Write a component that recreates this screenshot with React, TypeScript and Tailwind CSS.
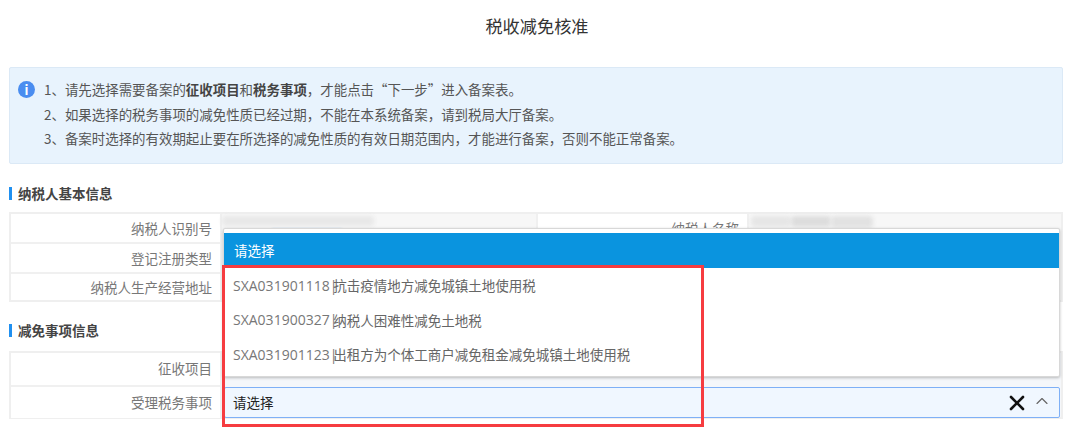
import { X, ChevronUp } from "lucide-react";

const font = { fontFamily: '"Noto Sans CJK SC","Open Sans",sans-serif' };

function Heading({ children, className }: { children: string; className: string }) {
  return (
    <div className={`flex items-center ${className}`}>
      <span className="h-[13px] w-[3px] bg-[#2090f0]" />
      <span className="ml-[6px] text-[13.5px] font-bold leading-[14px] text-[#444]">{children}</span>
    </div>
  );
}

function Label({ children, className = "" }: { children?: string; className?: string }) {
  return (
    <div className={`flex items-center justify-end overflow-hidden border-r-2 border-[#f0f0f0] bg-white pr-[8px] text-[13.5px] text-[#777] ${className}`}>
      {children}
    </div>
  );
}

function Smudge({ className }: { className: string }) {
  return <div className={`absolute rounded-sm blur-[2px] ${className}`} />;
}

export default function App() {
  const options = [
    ["SXA031901118|", "抗击疫情地方减免城镇土地使用税"],
    ["SXA031900327|", "纳税人困难性减免土地税"],
    ["SXA031901123|", "出租方为个体工商户减免租金减免城镇土地使用税"],
  ];
  return (
    <div style={font} className="relative h-[448px] w-[1080px] overflow-hidden bg-white pl-[9px] pr-[17px]">
      <h1 className="pl-[2px] pt-[14px] text-center text-[17.2px] font-normal leading-[24px] text-[#333]">税收减免核准</h1>

      <div className="mt-[29px] flex h-[97px] rounded-[2px] border border-[#dbe9f6] bg-[#e8f3fd] pl-[8px] pt-[9px]">
        <div className="mt-[4px] flex h-[17px] w-[17px] items-center justify-center rounded-full bg-[#4a8df0] text-[13px] font-bold leading-none text-white">i</div>
        <div className="ml-[9px] text-[13.45px] leading-[24.5px] text-[#555]">
          <p>1、请先选择需要备案的<b className="text-[#444]">征收项目</b>和<b className="text-[#444]">税务事项</b>，才能点击“下一步”进入备案表。</p>
          <p>2、如果选择的税务事项的减免性质已经过期，不能在本系统备案，请到税局大厅备案。</p>
          <p>3、备案时选择的有效期起止要在所选择的减免性质的有效日期范围内，才能进行备案，否则不能正常备案。</p>
        </div>
      </div>

      <Heading className="mt-[22px]">纳税人基本信息</Heading>

      <div className="mt-[12px] grid h-[90px] grid-cols-[211px_316px_211px_1fr] grid-rows-[30px_30px_26px] border-2 border-[#efefef] bg-[#f7f7f7]">
        <Label className="border-b-2 pt-[1px]">纳税人识别号</Label>
        <div className="relative border-r-2 border-[#f0f0f0]">
          <Smudge className="left-[0px] top-[2px] h-[10px] w-[152px] bg-[#e8e8e8]" />
          <div className="absolute left-[50px] top-[15px] h-[2px] w-[70px] rounded bg-[#7db8ec] blur-[1px]" />
        </div>
        <Label className="border-b-2 pt-[1px]">纳税人名称</Label>
        <div className="relative">
          <Smudge className="left-[2px] top-[2px] h-[11px] w-[40px] bg-[#e6e6e6]" />
          <Smudge className="left-[42px] top-[2px] h-[11px] w-[40px] bg-[#dddddd]" />
          <Smudge className="left-[82px] top-[2px] h-[12px] w-[42px] bg-[#e2e2e2]" />
        </div>
        <Label className="border-b-2 pt-[1px]">登记注册类型</Label>
        <div className="border-r-2 border-[#f0f0f0]" />
        <Label />
        <div />
        <Label className="pt-[1px]">纳税人生产经营地址</Label>
        <div className="col-span-3" />
      </div>

      <Heading className="mt-[21px]">减免事项信息</Heading>

      <div className="mt-[14px] grid h-[68px] grid-cols-[211px_1fr] grid-rows-[34px_1fr] border-2 border-[#efefef] bg-[#f5f7fa]">
        <Label className="border-b-2 pb-[2px]">征收项目</Label>
        <div />
        <Label>受理税务事项</Label>
        <div className="flex items-center pl-[2px] pr-[1px]">
          <div className="flex h-[31px] w-full items-center rounded-[2px] border border-[#7fb0f6] bg-[#f0f7ff] pl-[8px] pr-[7px] text-[13.5px] text-[#222]">
            <span className="flex-1">请选择</span>
            <X size={24} strokeWidth={2.6} className="text-[#111]" />
            <ChevronUp size={20} strokeWidth={1.4} className="-mt-[4px] ml-[3px] text-[#666]" />
          </div>
        </div>
      </div>

      <div className="absolute left-[223px] top-[228px] w-[837px] rounded-[2px] border border-[#d8d8d8] bg-white pt-[4px] shadow-[0_1px_3px_rgba(0,0,0,0.25)]">
        <div className="flex h-[35px] items-center bg-[#0a94df] pl-[10px] text-[13.5px] text-white">请选择</div>
        <div className="pb-[4px]">
          {options.map(([code, name]) => (
            <div key={code} className="flex h-[34.5px] items-center pl-[9px] text-[13.5px] text-[#666]">
              <span className="text-[14px] text-[#777]" style={{ fontFamily: '"Open Sans",sans-serif' }}>{code}</span>
              <span className="-ml-[4px]">{name}</span>
            </div>
          ))}
        </div>
      </div>

      <div className="absolute left-[222px] top-[265px] h-[162px] w-[482px] border-[3px] border-[#f63c40]" />
    </div>
  );
}
